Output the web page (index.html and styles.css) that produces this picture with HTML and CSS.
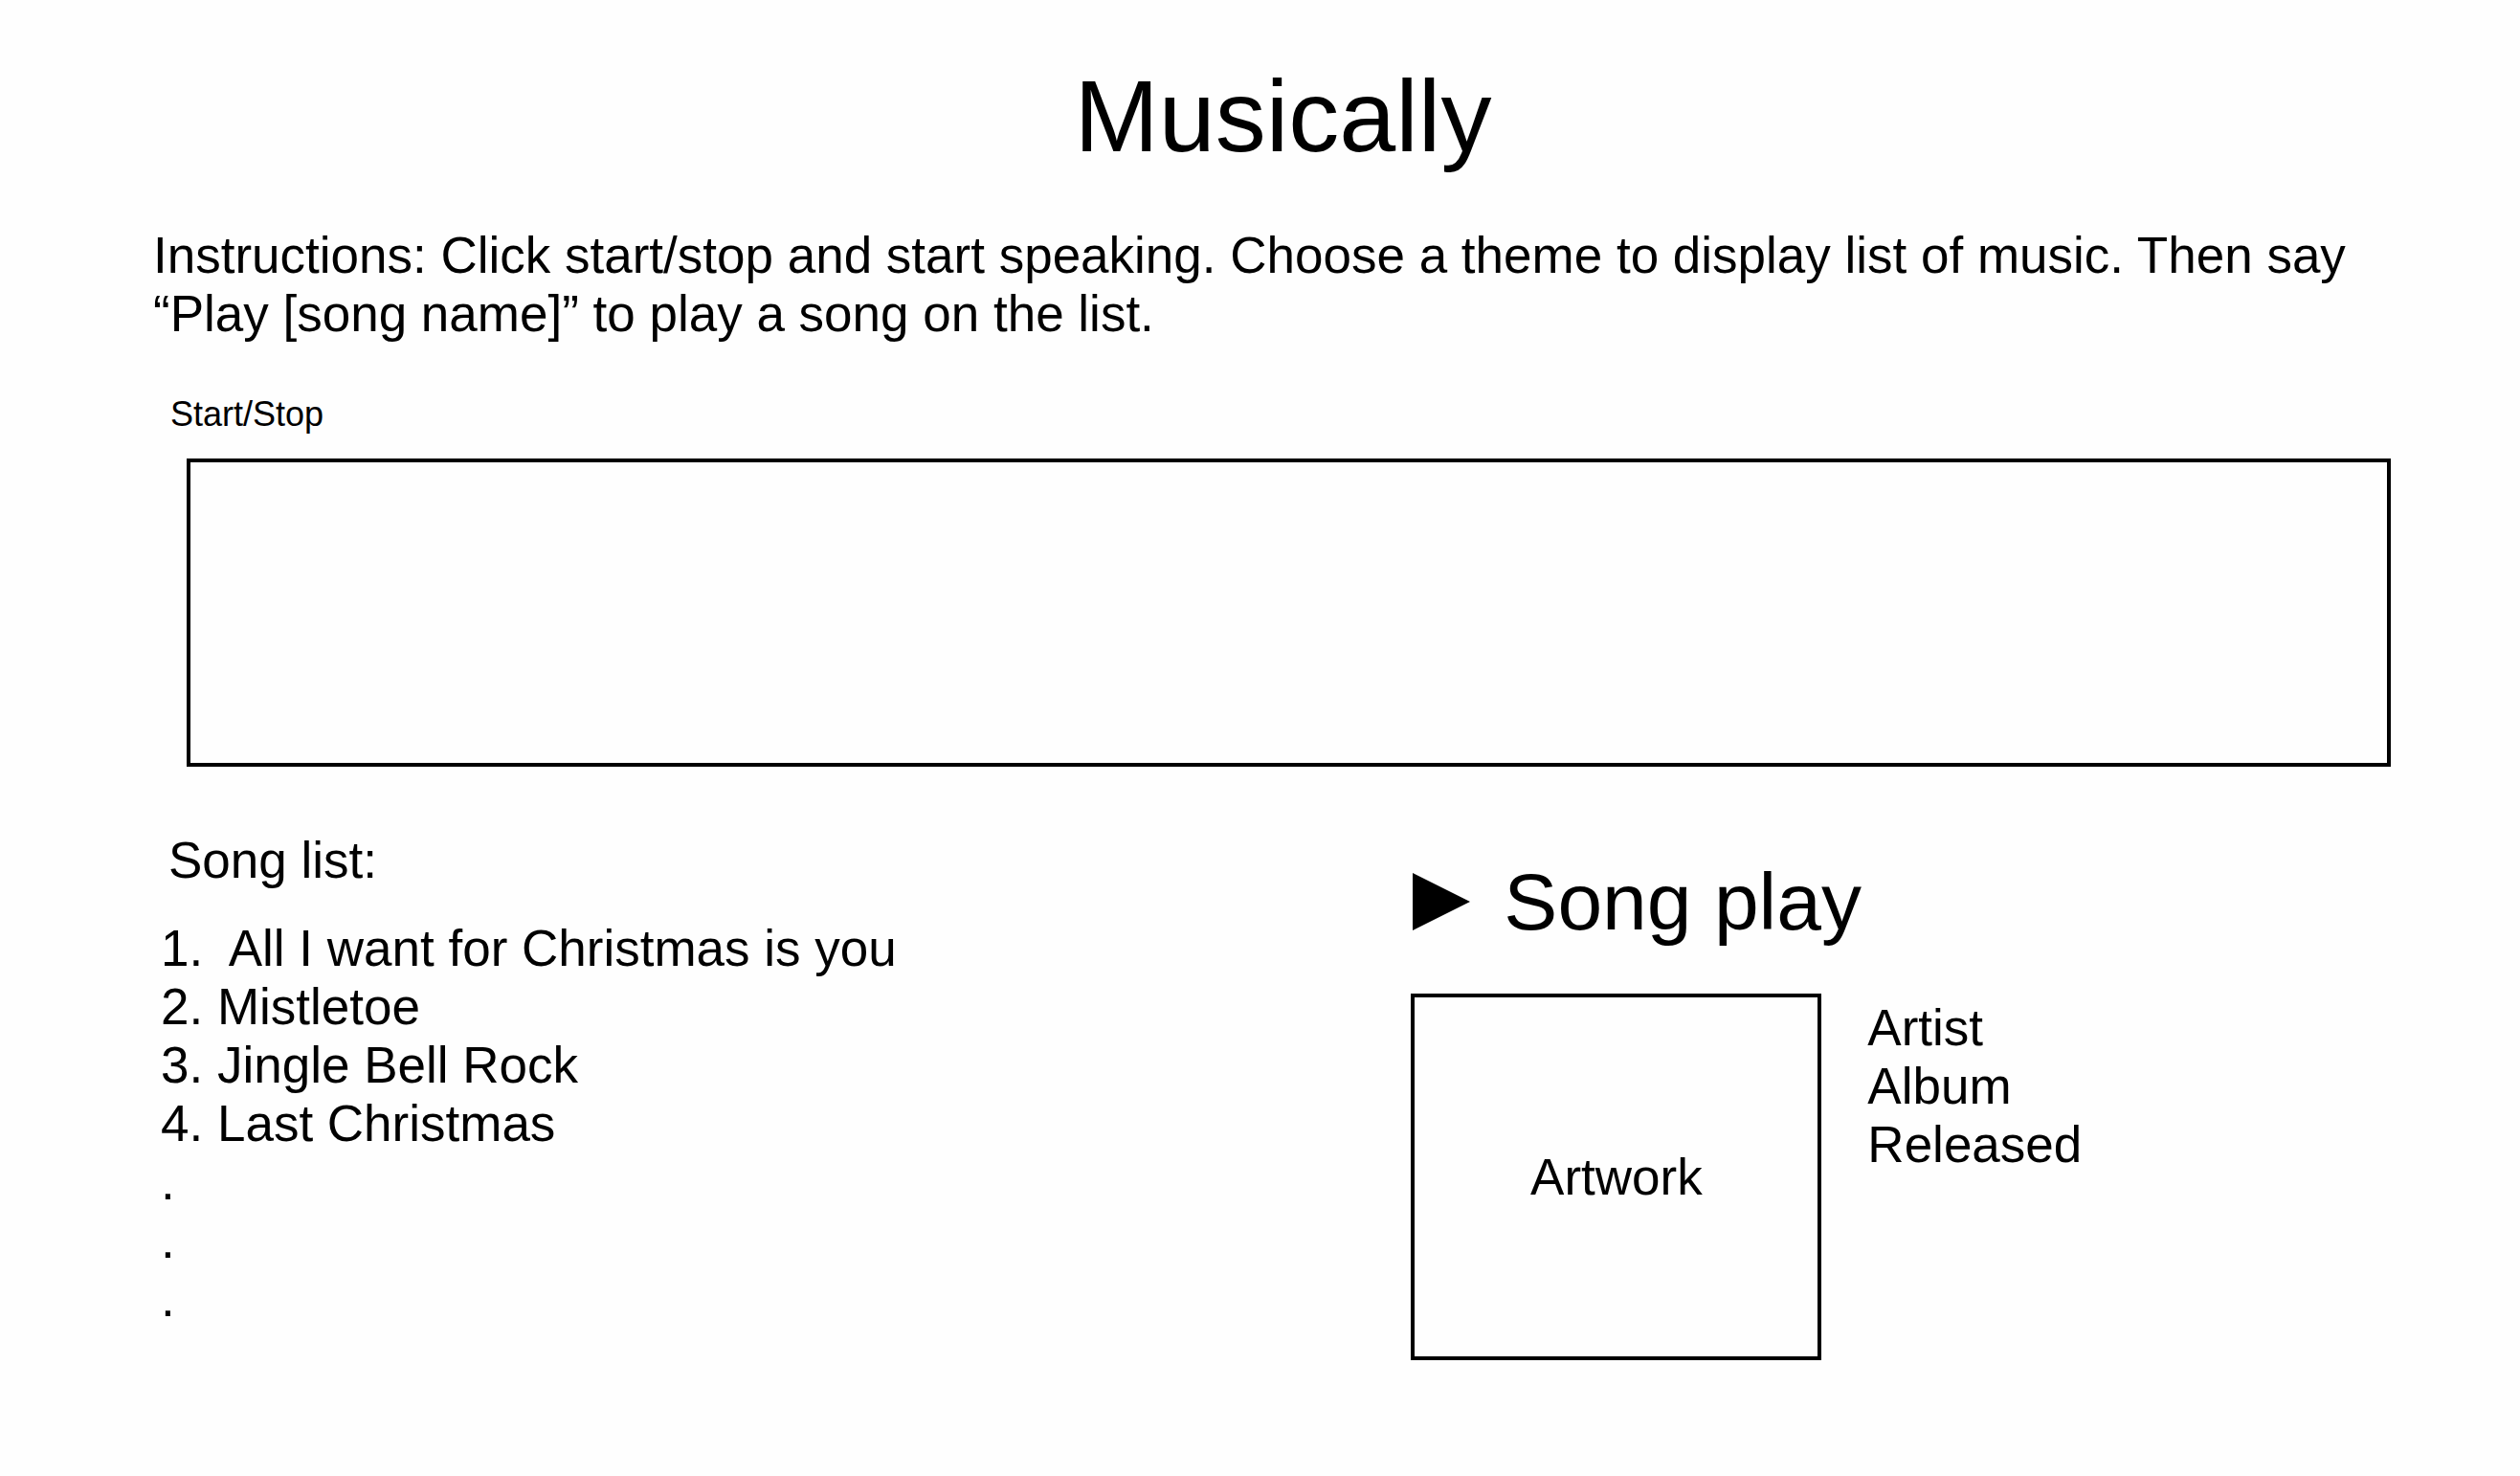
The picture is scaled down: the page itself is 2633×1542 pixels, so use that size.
FILE: index.html
```html
<!DOCTYPE html>
<html lang="en">
<head>
<meta charset="utf-8">
<meta name="viewport" content="width=device-width, initial-scale=1">
<title>Musically</title>
<link rel="stylesheet" href="styles.css">
</head>
<body>
<main class="page">
  <h1 class="title">Musically</h1>
  <p class="instructions">Instructions: Click start/stop and start speaking. Choose a theme to display list of music. Then say “Play [song name]” to play a song on the list.</p>
  <button class="toggle" type="button">Start/Stop</button>
  <textarea class="transcript" aria-label="Speech transcript" readonly></textarea>
  <div class="columns">
    <section class="songs">
      <h2 class="songs-title">Song list:</h2>
      <ul class="song-list">
        <li>1.&nbsp; All I want for Christmas is you</li>
        <li>2. Mistletoe</li>
        <li>3. Jingle Bell Rock</li>
        <li>4. Last Christmas</li>
        <li>.</li>
        <li>.</li>
        <li>.</li>
      </ul>
    </section>
    <section class="player">
      <div class="player-head">
        <button class="play" type="button" aria-label="Play">
          <svg class="play-icon" viewBox="0 0 60 60" aria-hidden="true"><path d="M0 0L60 30L0 60Z"/></svg>
        </button>
        <h2 class="player-title">Song play</h2>
      </div>
      <div class="player-body">
        <div class="artwork">Artwork</div>
        <ul class="details">
          <li>Artist</li>
          <li>Album</li>
          <li>Released</li>
        </ul>
      </div>
    </section>
  </div>
</main>
</body>
</html>
```
FILE: styles.css
```css
* {
  box-sizing: border-box;
  margin: 0;
  padding: 0;
}

body {
  background: #fefefe;
  color: #000;
  font: 53px/61px "Liberation Sans", Arial, sans-serif;
}

h1,
h2 {
  font-weight: 400;
}

ul {
  list-style: none;
}

button {
  border: 0;
  background: none;
  color: inherit;
  font: inherit;
  cursor: pointer;
}

.page {
  display: flex;
  flex-direction: column;
  padding: 60px 112px 59px 160px;
}

.title {
  font-size: 106px;
  line-height: 122px;
  text-align: center;
}

.instructions {
  margin-top: 54px;
}

.toggle {
  align-self: flex-start;
  margin: 54px 0 25px 18px;
  font-size: 36px;
  line-height: 42px;
}

.transcript {
  height: 322px;
  margin: 0 23px 0 35px;
  padding: 16px;
  border: 4px solid #000;
  background: none;
  font: inherit;
  resize: none;
}

.columns {
  display: grid;
  grid-template-columns: 54fr 43fr;
  margin-top: 67px;
}

.songs {
  padding-left: 8px;
}

.songs-title {
  padding-left: 8px;
  font-size: 53px;
}

.song-list {
  margin-top: 31px;
}

.player {
  padding-top: 25px;
}

.player-head {
  display: flex;
  align-items: center;
  gap: 35px;
}

.play {
  display: flex;
  padding-left: 2px;
}

.play-icon {
  width: 60px;
  height: 60px;
}

.player-title {
  font-size: 84px;
  line-height: 98px;
}

.player-body {
  display: flex;
  gap: 48px;
  margin-top: 47px;
}

.artwork {
  display: flex;
  align-items: center;
  justify-content: center;
  width: 429px;
  height: 383px;
  border: 4px solid #000;
}

.details {
  padding-top: 5px;
}
```
